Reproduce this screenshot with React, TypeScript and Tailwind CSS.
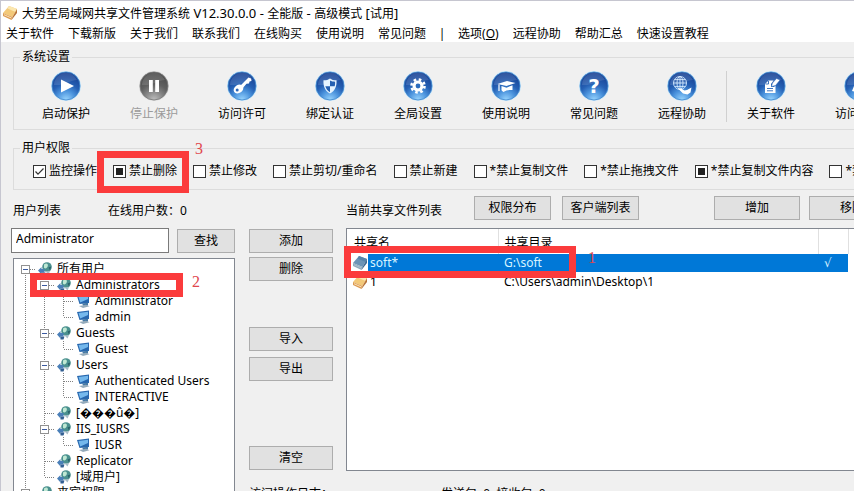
import type { ReactNode } from "react";

const menuItems = ["关于软件", "下载新版", "关于我们", "联系我们", "在线购买", "使用说明", "常见问题"];
const helpItems = ["远程协助", "帮助汇总", "快速设置教程"];

type Mark = "none" | "tick" | "mixed";

const permissions: { label: string; mark: Mark; callout?: string }[] = [
  { label: "监控操作", mark: "tick" },
  { label: "禁止删除", mark: "mixed", callout: "3" },
  { label: "禁止修改", mark: "none" },
  { label: "禁止剪切/重命名", mark: "none" },
  { label: "禁止新建", mark: "none" },
  { label: "*禁止复制文件", mark: "none" },
  { label: "*禁止拖拽文件", mark: "none" },
  { label: "*禁止复制文件内容", mark: "mixed" },
  { label: "*禁止打印", mark: "none" },
];

// lines: one character per indent cell. | pipe, + toggle, t tee, l last, L last toggle, r root toggle
const tree: { label: string; lines: string; user?: boolean; callout?: string }[] = [
  { label: "所有用户", lines: "r" },
  { label: "Administrators", lines: "|+", callout: "2" },
  { label: "Administrator", lines: "||t", user: true },
  { label: "admin", lines: "||l", user: true },
  { label: "Guests", lines: "|+" },
  { label: "Guest", lines: "||l", user: true },
  { label: "Users", lines: "|+" },
  { label: "Authenticated Users", lines: "||t", user: true },
  { label: "INTERACTIVE", lines: "||l", user: true },
  { label: "[\uFFFD\uFFFD\uFFFDû\uFFFD]", lines: "|t" },
  { label: "IIS_IUSRS", lines: "|+" },
  { label: "IUSR", lines: "||l", user: true },
  { label: "Replicator", lines: "|t" },
  { label: "[域用户]", lines: "|l" },
  { label: "来宾权限", lines: "L" },
];

function Orb({ children, gray }: { children: ReactNode; gray?: boolean }) {
  const id = gray ? "orb-gray" : "orb-blue";
  return (
    <svg viewBox="0 0 30 30" className="w-[30px] h-[30px]" aria-hidden="true">
      <defs>
        <radialGradient id={id} cx="50%" cy="100%" r="95%">
          <stop offset="0" stopColor={gray ? "#c0c0c0" : "#9ad6ff"} />
          <stop offset="0.35" stopColor={gray ? "#858585" : "#4a92dc"} />
          <stop offset="0.6" stopColor={gray ? "#606060" : "#2560b4"} />
          <stop offset="1" stopColor={gray ? "#4a4a4a" : "#163f92"} />
        </radialGradient>
      </defs>
      <circle cx="15" cy="15" r="15" fill={gray ? "#d9d9d9" : "#c4e4fa"} />
      <circle cx="15" cy="15" r="14" fill={`url(#${id})`} stroke={gray ? "#777" : "#3f86cc"} strokeWidth="0.8" />
      <path d="M3 14A12 12 0 0 1 26 9C20 9 13 15 3 14Z" fill="#fff" opacity="0.12" />
      {children}
    </svg>
  );
}

const tools: { label: string; gray?: boolean; glyph: ReactNode }[] = [
  { label: "启动保护", glyph: <path d="M10 8.5V21.5L23 15Z" fill="#fff" /> },
  {
    label: "停止保护",
    gray: true,
    glyph: <path d="M10 9h3.8v12H10zM16.2 9H20v12h-3.800z" fill="#fff" />,
  },
  {
    label: "访问许可",
    glyph: (
      <g>
        <path d="M12 16L21.500 6.500L24 7.500L24.500 10L22.500 10.500L22 12.500L19.500 12.800L15 18Z" fill="#fff" />
        <ellipse cx="11.500" cy="18" rx="5.200" ry="4" transform="rotate(-35 11.500 18)" fill="#fff" />
        <circle cx="10.200" cy="19" r="1.500" fill="#2b66b8" />
      </g>
    ),
  },
  {
    label: "绑定认证",
    glyph: (
      <g>
        <path d="M15 7.500C17 9 19.500 9.500 21.500 9.300C22 15 20 20 15 22.500C10 20 8 15 8.500 9.300C10.500 9.500 13 9 15 7.500Z" fill="#e6f4ff" />
        <path d="M15 15.300V21.200C12.500 19.800 11.200 18 10.300 15.300ZM15 15.300V9.500C16.500 10.300 18 10.700 20.100 10.700C20.200 12.300 20.100 13.600 19.700 15.300Z" fill="#2460b2" />
      </g>
    ),
  },
  {
    label: "全局设置",
    glyph: (
      <g>
        <circle cx="15" cy="15" r="5.500" fill="#fff" />
        <circle cx="15" cy="15" r="6.500" fill="none" stroke="#fff" strokeWidth="2.600" strokeDasharray="2.550 2.550" />
        <circle cx="15" cy="15" r="2.400" fill="#2b6cbd" />
      </g>
    ),
  },
  {
    label: "使用说明",
    glyph: (
      <g fill="#fff">
        <path d="M6.500 13L16 10L24.500 12L15.500 15Z" />
        <path d="M10.500 15L15.500 16.700L21.500 14.200V19C18 18.600 15 19.200 12.500 21C11.500 20 10.700 19.800 10.500 19Z" />
        <path d="M8 13.500V20" stroke="#fff" strokeWidth="1.200" />
      </g>
    ),
  },
  {
    label: "常见问题",
    glyph: (
      <text x="15" y="22" textAnchor="middle" fontSize="20" fontWeight="bold" fill="#fff" fontFamily="DejaVu Sans, sans-serif">
        ?
      </text>
    ),
  },
  {
    label: "远程协助",
    glyph: (
      <g>
        <g fill="none" stroke="#d6ebff" strokeWidth="0.9">
          <circle cx="13" cy="12" r="6.500" />
          <ellipse cx="13" cy="12" rx="3" ry="6.500" />
          <path d="M6.500 12h13M13 5.500v13M7.800 8.600h10.400M7.800 15.400h10.400" />
        </g>
        <path d="M11 17.500L14 17.500L17.500 19.500L20 19L24.500 16.500L23.500 21.500L20.500 23.500L16 22.500Z" fill="#fff" />
      </g>
    ),
  },
  {
    label: "关于软件",
    glyph: (
      <g>
        <path d="M9 13L12.500 9.500H17.500L15 13V16H18L19.500 14.500V22H9Z" fill="#fff" />
        <path d="M9.500 13H12.500V10M11 17.500h6M11 19.800h6" fill="none" stroke="#2b66b8" strokeWidth="0.9" />
        <path d="M15.500 15.500L16.500 12L20.500 7.500L24 9L19.500 14.500Z" fill="#fff" stroke="#2b66b8" strokeWidth="0.500" />
      </g>
    ),
  },
  {
    label: "访问官网",
    glyph: <path d="M8 20L12 10L16 7L22 14L20 17L15 13L12 21Z" fill="#fff" />,
  },
];

function BookIcon({ selected }: { selected?: boolean }) {
  return (
    <svg viewBox="0 0 16 16" className="w-4 h-4 shrink-0" aria-hidden="true">
      <path d="M1 8L7 1L15 4L10.500 12Z" fill={selected ? "#6b93b5" : "#f3c979"} />
      <path d="M7 1L15 4L13.500 7L5.500 3.500Z" fill={selected ? "#5684aa" : "#fbe7b0"} />
      <path d="M1 8L10.500 12L9.500 15L1 11Z" fill={selected ? "#8ea9bb" : "#dc9a50"} />
      <path d="M10.500 12L15 4V8L9.500 15Z" fill={selected ? "#3f6a90" : "#b87338"} />
      <path d="M2 9.700L9.500 13" stroke={selected ? "#b5c7d3" : "#fff3d6"} strokeWidth="0.800" />
    </svg>
  );
}

function GroupIcon() {
  return (
    <svg viewBox="0 0 14 14" className="w-[14px] h-[14px]" aria-hidden="true">
      <circle cx="9" cy="5" r="4.800" fill="#4b918f" />
      <path d="M6 2.500C8 0.500 10.500 1.500 9.800 4S7 7 6 5.800Z" fill="#bfe8d3" />
      <path d="M10.500 5.500L13.200 4.500L12 8.500Z" fill="#2a6068" />
      <path d="M6.500 8.500C9 10 11 9.800 12.500 8.300L10.500 12.500Z" fill="#a9bcc8" />
      <path d="M0 8.500L3.500 5V7H6.500V10.500H3.500V12.500Z" fill="#4a7fb8" />
      <path d="M3.500 10.500H7.500L6.500 13.500H3.500Z" fill="#335f92" />
    </svg>
  );
}

function UserIcon() {
  return (
    <svg viewBox="0 0 14 14" className="w-[14px] h-[14px]" aria-hidden="true">
      <path d="M1 2L13 0.500V9L3.500 10Z" fill="#2767ae" />
      <path d="M2.500 3L12 1.800V5L4.200 8.500Z" fill="#74b8ec" />
      <path d="M6 9.500L12 8.800L12 11.500L7.500 12Z" fill="#4579a5" />
      <path d="M3 12L10 10.800L13.500 12.300L7 14Z" fill="#94abbb" />
    </svg>
  );
}

function TreeCell({ kind }: { kind: string }) {
  const toggle = "r+L".includes(kind);
  const top = kind === "r" ? 8 : 0;
  const bottom = kind === "l" || kind === "L" ? 8 : 16;
  return (
    <span className="relative w-[19px] h-4 grid place-items-center shrink-0">
      <svg viewBox="0 0 19 16" className="absolute inset-0 w-[19px] h-4" stroke="#808080" strokeDasharray="1 1" aria-hidden="true">
        <path d={`M9.500 ${top}V${bottom}`} />
        {kind !== "|" && <path d="M10 8.500H19" />}
      </svg>
      {toggle && (
        <button type="button" aria-label="折叠" className="relative w-[9px] h-[9px] bg-white border border-[#919191] grid place-items-center">
          <span className="w-[5px] h-px bg-[#3a5aa0]" />
        </button>
      )}
    </span>
  );
}

function Callout({ className }: { className: string }) {
  return <span className={`absolute z-10 border-[7px] border-[#fb3b3c] pointer-events-none ${className}`} />;
}

function CalloutNumber({ className, children }: { className: string; children: ReactNode }) {
  return (
    <span className={`absolute z-10 text-base leading-4 text-[#e0474c] font-['Liberation_Serif',serif] ${className}`}>{children}</span>
  );
}

function PushButton({ children, className = "" }: { children: ReactNode; className?: string }) {
  return (
    <button type="button" className={`h-6 bg-[#e1e1e1] border border-[#adadad] text-center whitespace-nowrap shrink-0 ${className}`}>
      {children}
    </button>
  );
}

function Permission({ label, mark, callout }: { label: string; mark: Mark; callout?: string }) {
  return (
    <label className="relative flex items-center gap-[3px] shrink-0 whitespace-nowrap">
      <span className="relative w-[13px] h-[13px]">
        <input
          type="checkbox"
          defaultChecked={mark === "tick"}
          ref={(el) => {
            if (el) el.indeterminate = mark === "mixed";
          }}
          className="block appearance-none w-[13px] h-[13px] bg-white border border-[#333]"
        />
        {mark === "tick" && (
          <svg viewBox="0 0 13 13" className="absolute inset-0 pointer-events-none" fill="none" stroke="#333" strokeWidth="1.200">
            <path d="M2.500 6.500L5 9.200L10.500 3.500" />
          </svg>
        )}
        {mark === "mixed" && <span className="absolute inset-[3px] bg-[#222] pointer-events-none" />}
      </span>
      {label}
      {callout && (
        <>
          <Callout className="-left-4 -right-3 -top-3 -bottom-3.5" />
          <CalloutNumber className="left-full -top-[22px] ml-[18px]">{callout}</CalloutNumber>
        </>
      )}
    </label>
  );
}

function ShareTable() {
  return (
    <div className="relative bg-white border border-[#828790] h-[243px]">
      <table className="table-fixed w-[501px] border-collapse text-left">
        <colgroup>
          <col className="w-[151px]" />
          <col className="w-[320px]" />
          <col className="w-[30px]" />
        </colgroup>
        <thead>
          <tr className="h-[25px]">
            <th className="font-normal p-0 pt-[2px] pl-[7px] border-r border-[#e0e0e0]">共享名</th>
            <th className="font-normal p-0 pt-[2px] pl-[6px] border-r border-[#e0e0e0]">共享目录</th>
            <th className="border-r border-[#e0e0e0]" />
          </tr>
        </thead>
        <tbody>
          <tr className="h-[18px] text-[#d8f4ff]">
            <td className="p-0">
              <div className="flex items-center pl-[5px] leading-[18px]">
                <BookIcon selected />
                <span className="bg-[#0078d7] flex-1 pl-[2px]">soft*</span>
              </div>
            </td>
            <td className="p-0 pl-[6px] leading-[18px] bg-[#0078d7]">G:\soft</td>
            <td className="p-0 pl-[6px] leading-[18px] bg-[#0078d7] font-['DejaVu_Sans',sans-serif]">√</td>
          </tr>
          <tr className="h-5">
            <td className="p-0">
              <div className="flex items-center gap-[2px] pl-[5px]">
                <BookIcon />1
              </div>
            </td>
            <td className="p-0 pl-[6px]">C:\Users\admin\Desktop\1</td>
            <td />
          </tr>
        </tbody>
      </table>
      <Callout className="-left-[3px] top-[17px] w-[232px] h-8" />
      <CalloutNumber className="left-[241px] top-[21px]">1</CalloutNumber>
    </div>
  );
}

export default function App() {
  return (
    <div className="h-screen overflow-hidden bg-[#f0f0f0] border-t border-l border-[#c6c6d0] text-black text-xs leading-4 font-['Noto_Sans','Noto_Sans_CJK_SC',sans-serif]">
      <div className="min-w-[960px] h-full flex flex-col">
        <header className="bg-white">
          <h1 className="h-6 flex items-center gap-1 pl-px">
            <BookIcon />
            <span>
              大势至局域网共享文件管理系统<span className="text-[13px]"> V12.30.0.0 - </span>全能版
              <span className="text-[13px]"> - </span>高级模式<span className="text-[13px]"> [</span>试用
              <span className="text-[13px]">]</span>
            </span>
          </h1>
          <nav className="h-[17px] flex items-center gap-[14px] pl-[5px]">
            {menuItems.map((item) => (
              <a key={item} href="#">{item}</a>
            ))}
            <span className="w-1 flex justify-center">|</span>
            <a href="#">
              选项(<u>O</u>)
            </a>
            {helpItems.map((item) => (
              <a key={item} href="#">{item}</a>
            ))}
          </nav>
        </header>

        <main className="flex-1 flex flex-col pt-[7px] pl-3">
          <fieldset className="border border-[#dcdcdc] pb-[7px]">
            <legend className="ml-[6px] px-[2px]">系统设置</legend>
            <div className="flex pt-[6px] pl-2">
              {tools.map((tool, i) => (
                <div key={tool.label} className="flex">
                  {i === 8 && <span className="w-px bg-[#d0d0d0]" />}
                  <button type="button" disabled={tool.gray} className="w-[88px] flex flex-col items-center gap-[5px] disabled:text-[#9b9b9b]">
                    <Orb gray={tool.gray}>{tool.glyph}</Orb>
                    {tool.label}
                  </button>
                </div>
              ))}
            </div>
          </fieldset>

          <fieldset className="border border-[#dcdcdc] mt-[10px] pb-[10px]">
            <legend className="ml-[6px] px-[2px]">用户权限</legend>
            <div className="flex gap-4 pt-[7px] pl-[19px]">
              {permissions.map((item) => (
                <Permission key={item.label} {...item} />
              ))}
            </div>
          </fieldset>

          <div className="flex-1 flex pt-[6px] -ml-0.5">
            <section className="w-56 flex flex-col">
              <div className="h-8 flex gap-[47px] pt-[7px] pl-0.5">
                <label htmlFor="user">用户列表</label>
                <span>在线用户数：0</span>
              </div>
              <div className="flex items-center gap-2">
                <input id="user" defaultValue="Administrator" className="flex-1 min-w-0 h-[25px] bg-white border border-[#7a7a7a] px-1 pb-1" />
                <PushButton className="w-[58px]">查找</PushButton>
              </div>
              <ul className="flex-1 mt-[5px] ml-0.5 pt-[2px] pl-[2px] bg-white border border-[#828790]">
                {tree.map((node) => (
                  <li key={node.label} className="relative h-4 flex items-center">
                    {node.lines.split("").map((kind, i) => (
                      <TreeCell key={i} kind={kind} />
                    ))}
                    <span className="w-[22px] pl-[3px] relative shrink-0">{node.user ? <UserIcon /> : <GroupIcon />}</span>
                    <span className="whitespace-nowrap">{node.label}</span>
                    {node.callout && (
                      <>
                        <Callout className="left-[14px] -top-1 w-[153px] h-6" />
                        <CalloutNumber className="left-44 -top-[3px]">{node.callout}</CalloutNumber>
                      </>
                    )}
                  </li>
                ))}
              </ul>
            </section>

            <section className="w-[84px] ml-[14px] pt-[33px] flex flex-col">
              <PushButton>添加</PushButton>
              <PushButton className="mt-1">删除</PushButton>
              <PushButton className="mt-[46px]">导入</PushButton>
              <PushButton className="mt-[6px]">导出</PushButton>
              <PushButton className="mt-[65px]">清空</PushButton>
              <p className="mt-4 whitespace-nowrap">访问操作日志：</p>
            </section>

            <section className="flex-1 ml-[13px]">
              <div className="flex h-8">
                <h2 className="w-32 pt-[7px]">当前共享文件列表</h2>
                <PushButton className="w-[77px]">权限分布</PushButton>
                <PushButton className="w-[77px] ml-[11px]">客户端列表</PushButton>
                <PushButton className="w-[86px] ml-[75px]">增加</PushButton>
                <PushButton className="w-[86px] ml-[9px]">移除</PushButton>
              </div>
              <ShareTable />
              <p className="mt-[15px] pl-[95px]">发送包: 0, 接收包: 0</p>
            </section>
          </div>
        </main>
      </div>
    </div>
  );
}
